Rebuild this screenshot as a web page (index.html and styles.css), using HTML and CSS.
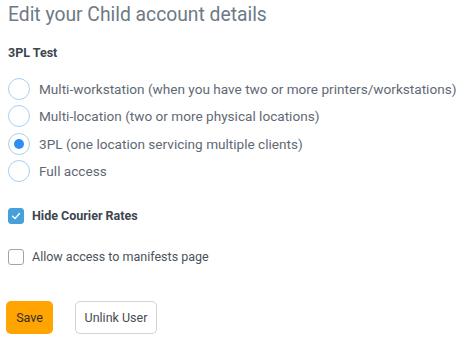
FILE: index.html
```html
<!DOCTYPE html>
<html>
<head>
<meta charset="utf-8">
<link rel="stylesheet" href="styles.css">
</head>
<body>
<div class="page">
  <h1 class="title">Edit your Child account details</h1>
  <div class="account">3PL Test</div>
  <div class="radios">
    <label class="radio"><span class="circle"></span><span class="rlabel">Multi-workstation (when you have two or more printers/workstations)</span></label>
    <label class="radio"><span class="circle"></span><span class="rlabel">Multi-location (two or more physical locations)</span></label>
    <label class="radio"><span class="circle checked"><span class="dot"></span></span><span class="rlabel">3PL (one location servicing multiple clients)</span></label>
    <label class="radio"><span class="circle"></span><span class="rlabel">Full access</span></label>
  </div>
  <label class="check first"><span class="box on"><svg width="10" height="8" viewBox="0 0 10 8"><path d="M1.5 4.2 L4 6.5 L8.5 1.5" fill="none" stroke="#fff" stroke-width="1.4" stroke-linecap="round" stroke-linejoin="round"/></svg></span><span class="clabel bold">Hide Courier Rates</span></label>
  <label class="check second"><span class="box"></span><span class="clabel">Allow access to manifests page</span></label>
  <div class="buttons">
    <button class="btn save">Save</button>
    <button class="btn unlink">Unlink User</button>
  </div>
</div>
</body>
</html>
```

FILE: styles.css
```css
html, body { margin: 0; padding: 0; background: #fff; }
body { font-family: Roboto, "Noto Sans", sans-serif; }
.page { padding: 3px 8px 0 8px; }
.title {
  margin: 0;
  font-size: 19.3px;
  font-weight: 400;
  color: #6d7986;
  line-height: 24px;
}
.account {
  margin-top: 18px;
  font-size: 12.5px;
  font-weight: 700;
  color: #3d454e;
  line-height: 16px;
}
.radios {
  margin-top: 17px;
  display: flex;
  flex-direction: column;
  gap: 6.5px;
}
.radio {
  display: flex;
  align-items: center;
  gap: 9px;
  height: 21px;
}
.circle {
  box-sizing: border-box;
  width: 22px;
  height: 22px;
  border: 1.5px solid #a9d0f5;
  border-radius: 50%;
  display: flex;
  align-items: center;
  justify-content: center;
  flex: none;
}
.dot { width: 10px; height: 10px; border-radius: 50%; background: #2f8ef6; }
.rlabel { font-size: 13.6px; color: #5f6974; white-space: nowrap; }
.check {
  display: flex;
  align-items: center;
  gap: 8px;
  height: 16px;
}
.check.first { margin-top: 26px; }
.check.second { margin-top: 25px; }
.box {
  box-sizing: border-box;
  width: 16px;
  height: 16px;
  border: 1px solid #9aa6b2;
  border-radius: 3px;
  flex: none;
  display: flex;
  align-items: center;
  justify-content: center;
}
.box.on { background: #47a0dc; border-color: #47a0dc; }
.clabel { font-size: 12.5px; color: #4a525b; }
.clabel.bold { font-weight: 700; color: #3d454e; }
.buttons {
  margin-top: 36px;
  display: flex;
  gap: 22px;
  margin-left: -2px;
}
.btn {
  font-family: Roboto, "Noto Sans", sans-serif;
  font-size: 12.5px;
  height: 33px;
  border-radius: 5px;
  cursor: pointer;
}
.save {
  width: 47px;
  background: #ffa400;
  border: none;
  color: #2d2d2d;
}
.unlink {
  width: 82px;
  background: #fff;
  border: 1px solid #d0d4d8;
  color: #454c54;
}
```
